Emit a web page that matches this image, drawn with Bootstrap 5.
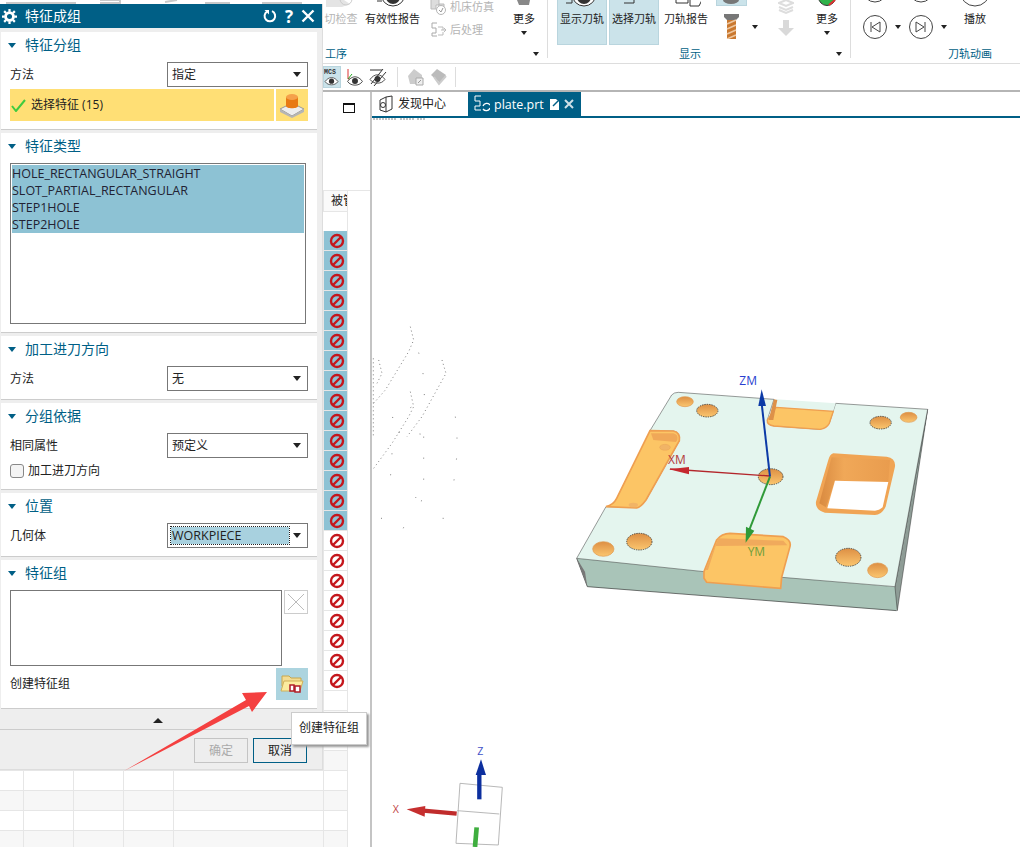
<!DOCTYPE html>
<html lang="zh-CN">
<head>
  <meta charset="UTF-8" />
  <meta name="viewport" content="width=device-width, initial-scale=1.0" />
  <title>特征成组</title>
  <link href="https://cdn.jsdelivr.net/npm/bootstrap@5.3.3/dist/css/bootstrap.min.css" rel="stylesheet">
  <style>
    :root { --nx-teal: #005f86; --nx-hl: #8dc2d4; --nx-active: #cbe3ea; }
    html, body { height: 847px; overflow: hidden; }
    body { width: 1020px; position: relative; background: #fff; color: #222; font: 12px/1.2 "Open Sans", "Noto Sans CJK SC", sans-serif; }

    /* ribbon */
    .ribbon { height: 64px; padding-left: 323px; border-bottom: 1px solid #ddd; overflow: hidden; font-size: 11px; }
    .rib-behind { position: absolute; left: 0; top: 0; }
    .rib-group { height: 58px; border-right: 1px solid #ddd; flex: none; }
    .rib-g1 { width: 225px; }
    .rib-g2 { width: 303px; padding-left: 9px; }
    .rib-g3 { width: 169px; border-right: 0; padding-left: 12px; }
    .rib-items { height: 48px; flex: none; }
    .rib-label { height: 12px; flex: none; color: var(--nx-teal); line-height: 12px; padding-right: 8px; }
    .rib-item { height: 45px; display: flex; flex-direction: column; align-items: center; text-align: center; white-space: nowrap; }
    .rib-item svg { display: block; flex: none; }
    .rib-top { height: 12px; overflow: hidden; flex: none; }
    .rib-off { color: #b5b5b5; }
    .rib-on { background: var(--nx-active); border: 1px solid #b9d5de; border-top: 0; }
    .caret-d { width: 0; height: 0; border: 3.5px solid transparent; border-top: 4px solid #222; border-bottom: 0; display: inline-block; flex: none; }
    .w-check { width: 36px; }
    .w-valid { width: 55px; margin-left: 6px; }
    .w-tools { width: 64px; margin: -5px 0 0 10px; }
    .w-more { width: 22px; margin-left: 19px; }
    .w-show { width: 50px; margin-right: 2px; }
    .w-report { width: 44px; margin-left: 3px; }
    .w-drill { width: 31px; margin-left: 8px; }
    .drill-top { height: 6px; }
    .drill-row { margin-top: 8px; padding-left: 8px; gap: 12px; }
    .drill-row svg { flex: none; }
    .w-stack { width: 16px; margin-left: 31px; }
    .w-more2 { width: 22px; margin-left: 22px; }
    .w-play { width: 24px; }
    .rib-small { height: 23px; color: #b5b5b5; gap: 4px; }
    .rib-item .caret-d { margin-top: 6px; }
    .label-g1 { margin-left: 2px; }
    .label-g2 { margin-left: 122px; }
    .label-g3 { margin-right: 20px; }

    /* second toolbar */
    .toolbar { height: 28px; padding-left: 323px; border-bottom: 2px solid #b5b5b5; }
    .tb-btn { width: 18px; height: 22px; margin-right: 5px; }
    .tb-on { background: var(--nx-active); border: 1px solid #b9d5de; }
    .tb-sep { width: 1px; height: 20px; background: #ddd; margin: 0 9px 0 5px; }
    .tb-sep.tb-last { margin-left: 2px; }

    /* page body */
    .work { height: 755px; }
    .side { width: 372px; flex: none; border-right: 2px solid #c4c4c4; overflow: hidden; }
    .side-top { height: 98px; padding: 11px 0 0 343px; }
    .win-box { width: 12px; height: 10px; border: 1px solid #111; border-top-width: 2px; }
    .grid-row { display: grid; grid-template-columns: 24px 50px 50px 50px 150px 24px 1fr; height: 20px; }
    .grid-row > span { border-right: 1px solid #e6e6e6; border-bottom: 1px solid #e6e6e6; }
    .grid-row > span:last-child { border: 0; }
    .grid-row.alt > span:not(:last-child) { background: #f7f7f7; }
    .grid-row.hit > span:nth-child(6) { background: var(--nx-hl); }
    .ban-cell { padding-left: 2px; }
    .grid-head { height: 22px; border-top: 1px solid #e6e6e6; }
    .grid-head > span:nth-child(6) { overflow: hidden; white-space: nowrap; padding: 3px 0 0 7px; background: #fafafa; width: 24px; }
    .grid-gap { height: 19px; padding-left: 324px; }
    .grid-gap i { display: block; width: 24px; height: 100%; border-right: 1px solid #e6e6e6; }
    .view { min-width: 0; }
    .tabs { height: 26px; border-bottom: 2px solid var(--nx-teal); }
    .tab-item { height: 24px; gap: 4px; }
    .tab-home { width: 96px; padding-left: 6px; font-size: 12px; }
    .tab-live { width: 113px; padding-left: 6px; background: var(--nx-teal); color: #fff; font-size: 12.5px; }
    .canvas3d { display: block; width: 648px; height: 729px; }

    /* dialog */
    .nx-dialog { position: absolute; left: 0; top: 4px; width: 323px; height: 766px; background: #eee; border-right: 1px solid #ddd; border-bottom: 1px solid #ddd; z-index: 5; }
    .nx-title { height: 24px; background: var(--nx-teal); color: #fff; font-size: 14px; margin-bottom: 4px; padding: 0 7px 0 2px; }
    .nx-title b { font-weight: 700; font-size: 17px; line-height: 1; }
    .sec { width: 316px; margin: 0 0 3px 1px; padding: 0 9px; background: #fff; border: 0; border-bottom: 1px solid #ccc; border-radius: 0; }
    .sec-head { height: 30px; color: var(--nx-teal); font-size: 14px; gap: 9px; padding: 0 0 4px; margin-left: -2px; }
    .caret-s { width: 0; height: 0; border: 4px solid transparent; border-top: 5px solid var(--nx-teal); border-bottom: 0; flex: none; }
    .sec-1 { height: 98px; }
    .sec-2 { height: 200px; }
    .sec-3 { height: 64px; }
    .sec-4 { height: 87px; }
    .sec-5 { height: 64px; }
    .sec-6 { height: 149px; }
    .form-line { height: 25px; }
    .form-line label { margin-top: 2px; }
    .nx-select { width: 141px; height: 25px; padding: 0 6px 0 4px; border: 1px solid #777; border-radius: 0; background: #fff; font-size: 12px; color: #222; }
    .nx-select::after { margin: 0; border-top: 5px solid #222; border-left: 4px solid transparent; border-right: 4px solid transparent; border-bottom: 0; }
    .sel-on { display: block; line-height: 17px; font-size: 12.5px; background: #a8d1df; outline: 1px dotted #222; padding: 0 0 0 1px; margin-left: -1px; width: 118px; text-align: left; }
    .pick-row { height: 32px; margin-top: 2px; gap: 2px; }
    .pick-main { flex: 1; background: #ffdf75; gap: 5px; padding-left: 1px; }
    .pick-tile { width: 32px; height: 32px; background: #ffdf75; }
    .type-box { width: 296px; height: 161px; border: 1px solid #777; padding: 1px; }
    .type-box div { background: var(--nx-hl); height: 17px; line-height: 17px; font-size: 12.5px; white-space: nowrap; color: #223; }
    .group-box { width: 272px; height: 76px; border: 1px solid #777; }
    .del-btn { width: 24px; height: 24px; border: 1px solid #ccc; background: #fff; }
    .make-row { height: 32px; margin-top: 2px; }
    .folder-tile { width: 32px; height: 32px; background: #acd4df; }
    .form-check.nx-check { min-height: 0; margin: 5px 0 0; padding: 0; gap: 4px; }
    .nx-check .form-check-input { float: none; width: 14px; height: 14px; margin: 0; border: 1px solid #888; border-radius: 3px; background-color: #f4f4f4; }
    .nx-check label { margin-top: 1px; }
    .nx-split { height: 17px; width: 316px; }
    .nx-rule { border-top: 1px solid #ccc; }
    .caret-u { width: 0; height: 0; border: 5px solid transparent; border-bottom: 5px solid #222; border-top: 0; }
    .nx-foot { padding: 8px 15px 0 0; gap: 5px; }
    .nx-btn { width: 54px; height: 25px; padding: 0; border-radius: 0; font-size: 12px; background: #eee; }
    .nx-btn:disabled { border: 1px solid #c4c4c4; color: #aaa; opacity: 1; background: #eee; }
    .nx-cancel { border: 1px solid var(--nx-teal); color: #222; }

    /* things that lie over the page */
    .nx-tip { position: absolute; left: 291px; top: 712px; width: 76px; height: 33px; z-index: 7; background: #fff; border: 1px solid #ccc; box-shadow: 2px 2px 2px #999; font-size: 12px; }
    .red-arrow { position: absolute; left: 100px; top: 670px; z-index: 6; }
  </style>
</head>
<body>

  <svg width="0" height="0" class="position-absolute">
    <defs>
      <linearGradient id="holeFill" x1="0" y1="0" x2="0" y2="1">
        <stop offset="0" stop-color="#dd8f44"/>
        <stop offset="1" stop-color="#fbc66f"/>
      </linearGradient>
      <linearGradient id="wallFill" x1="0" y1="0" x2="1" y2="0">
        <stop offset="0" stop-color="#d98a40"/>
        <stop offset=".35" stop-color="#f0a858"/>
        <stop offset="1" stop-color="#e99c4e"/>
      </linearGradient>
    </defs>
    <symbol id="ban" viewBox="0 0 16 16">
      <circle cx="8" cy="8" r="6" fill="none" stroke="#c4161c" stroke-width="2.4"/>
      <path d="M4 12 12 4" stroke="#c4161c" stroke-width="2.4"/>
    </symbol>
    <symbol id="eye" viewBox="0 0 18 14">
      <path d="M1 8c2-3 5-5 8-5s6 2 8 5c-2 3-5 4-8 4S3 11 1 8Z" fill="#fff" stroke="#444"/>
      <circle cx="9" cy="7.5" r="3.2" fill="#333"/>
    </symbol>
  </svg>

  <!-- ribbon -->
  <svg class="rib-behind" width="323" height="4"><path d="M6 3h70M100 0h20v3h-20M165 2l12-2M205 3h25M262 3h40" stroke="#c9c9c9" stroke-width="2" fill="none"/></svg>
  <div class="ribbon d-flex">
    <div class="rib-group rib-g1 d-flex flex-column">
      <div class="rib-items d-flex">
        <div class="rib-item w-check rib-off">
          <div class="rib-top"><svg width="30" height="12"><path d="M0 0h18l6 4-8 3H0Z" fill="#e4e4e4"/><circle cx="20" cy="-1" r="6" fill="none" stroke="#ccc"/></svg></div>
          <span>切检查</span>
        </div>
        <div class="rib-item w-valid">
          <div class="rib-top"><svg width="32" height="12"><circle cx="16" cy="-6" r="12" fill="#fff" stroke="#333"/><circle cx="16" cy="-3" r="7" fill="#333"/><path d="M0 1h5" stroke="#333"/></svg></div>
          <span>有效性报告</span>
        </div>
        <div class="w-tools">
          <div class="rib-small d-flex align-items-center">
            <svg width="16" height="18"><path d="M1 1h8v6H6v4H1Zm8 5h5v5H9Z" fill="#ddd" stroke="#bbb"/><circle cx="11" cy="12" r="4.5" fill="#fff" stroke="#b5b5b5"/><path d="m9 12 2 2 2-4" fill="none" stroke="#999"/></svg>
            <span>机床仿真</span>
          </div>
          <div class="rib-small d-flex align-items-center">
            <svg width="16" height="18"><path d="M7 2H2v5h4v5H2v3h5" fill="none" stroke="#aaa"/><path d="M8 6h5v3M8 14h5v-3M11 9h5l-2-2m2 2-2 2" fill="none" stroke="#bbb"/></svg>
            <span>后处理</span>
          </div>
        </div>
        <div class="rib-item w-more">
          <div class="rib-top"><svg width="16" height="12"><path d="M1 0h13l-1 5H3Z" fill="#888"/></svg></div>
          <span>更多</span>
          <i class="caret-d"></i>
        </div>
      </div>
      <div class="rib-label d-flex justify-content-between align-items-center"><span class="label-g1">工序</span><i class="caret-d"></i></div>
    </div>

    <div class="rib-group rib-g2 d-flex flex-column">
      <div class="rib-items d-flex">
        <div class="rib-item w-show rib-on">
          <div class="rib-top"><svg width="32" height="12"><circle cx="18" cy="-6" r="12" fill="#fff" stroke="#333"/><circle cx="18" cy="-3" r="7" fill="#333"/><path d="M0 3h6V0" fill="none" stroke="#333"/></svg></div>
          <span>显示刀轨</span>
        </div>
        <div class="rib-item w-show rib-on">
          <div class="rib-top"><svg width="32" height="12"><path d="M6 3h10V0" fill="none" stroke="#333"/></svg></div>
          <span>选择刀轨</span>
        </div>
        <div class="rib-item w-report">
          <div class="rib-top"><svg width="30" height="12"><path d="M5 0v3h12V0M19 0v6h9l3-6" fill="#fff" stroke="#333"/></svg></div>
          <span>刀轨报告</span>
        </div>
        <div class="w-drill">
          <div class="rib-on drill-top"><svg class="d-block mx-auto" width="29" height="5"><ellipse cx="14" cy="0" rx="8" ry="4" fill="#777"/></svg></div>
          <div class="drill-row d-flex align-items-center">
            <svg width="16" height="25" viewBox="0 0 16 25"><path d="M0 0h15v3l-3 3H3L0 3Z" fill="#777"/><path d="M3 6h9v19H3Z" fill="#c9782f"/><path d="m3 10 9-4M3 15l9-4M3 20l9-4M3 25l9-4" stroke="#eec7a0" stroke-width="1.5"/></svg>
            <i class="caret-d"></i>
          </div>
        </div>
        <div class="w-stack">
          <svg class="d-block" width="16" height="15"><path d="M1 3 8 0l7 3-7 3Zm0 4 7 3 7-3m-14 3 7 3 7-3" fill="none" stroke="#ddd" stroke-width="2"/></svg>
          <svg class="d-block mt-1" width="16" height="18"><path d="M5 1h6v8h5l-8 8-8-8h5Z" fill="#d9d9d9"/></svg>
        </div>
        <div class="rib-item w-more2">
          <div class="rib-top"><svg width="20" height="12"><circle cx="10" cy="-3" r="8.5" fill="#2fb24a" stroke="#333"/><path d="M12 5 18 0" stroke="#d33" stroke-width="2"/></svg></div>
          <span>更多</span>
          <i class="caret-d"></i>
        </div>
      </div>
      <div class="rib-label d-flex justify-content-between align-items-center"><span class="label-g2">显示</span><i class="caret-d"></i></div>
    </div>

    <div class="rib-group rib-g3 d-flex flex-column">
      <div class="rib-items d-flex">
        <div class="d-flex flex-column">
          <svg width="24" height="3"><circle cx="12" cy="-10" r="12" fill="none" stroke="#444"/></svg>
          <div class="d-flex align-items-center mt-2 pt-1">
            <svg width="24" height="24"><circle cx="12" cy="12" r="11.5" fill="#fff" stroke="#444"/><path d="M8 7v10M17 7l-8 5 8 5Z" fill="none" stroke="#444"/></svg>
            <i class="caret-d ms-2"></i>
          </div>
        </div>
        <div class="d-flex flex-column ms-2">
          <svg width="24" height="3"><circle cx="12" cy="-10" r="12" fill="none" stroke="#444"/></svg>
          <div class="d-flex align-items-center mt-2 pt-1">
            <svg width="24" height="24"><circle cx="12" cy="12" r="11.5" fill="#fff" stroke="#444"/><path d="M16 7v10M7 7l8 5-8 5Z" fill="none" stroke="#444"/></svg>
            <i class="caret-d ms-2"></i>
          </div>
        </div>
        <div class="rib-item w-play ms-3">
          <div class="rib-top"><svg width="30" height="12"><circle cx="15" cy="-9" r="15" fill="none" stroke="#444"/></svg></div>
          <span>播放</span>
        </div>
      </div>
      <div class="rib-label d-flex justify-content-end"><span class="label-g3">刀轨动画</span></div>
    </div>
  </div>

  <!-- second toolbar -->
  <div class="toolbar d-flex align-items-center">
    <div class="tb-btn tb-on d-flex align-items-center justify-content-center">
      <svg width="17" height="20" viewBox="0 0 17 20"><text x="0" y="7" font-size="7" font-weight="700" font-family="Liberation Mono, monospace" fill="#333">MCS</text><use href="#eye" y="8" width="16" height="12"/></svg>
    </div>
    <div class="tb-btn d-flex align-items-center"><svg width="18" height="20" viewBox="0 0 18 20"><path d="M2 2v10h8" fill="none" stroke="#d33"/><path d="M2 12 6 7" stroke="#2a2"/><use href="#eye" y="7" width="18" height="13"/></svg></div>
    <div class="tb-btn d-flex align-items-center"><svg width="18" height="20" viewBox="0 0 18 20"><path d="M1 3h12" stroke="#333"/><use href="#eye" y="5" width="17" height="13"/><path d="M2 17 14 2M5 19 17 5" stroke="#333"/></svg></div>
    <i class="tb-sep"></i>
    <div class="tb-btn d-flex align-items-center"><svg width="18" height="18"><path d="M7 1 1 8l2 8h12V7Z" fill="#ccc"/><path d="M9 10h7v7H9Z" fill="#eee" stroke="#aaa"/><path d="m11 15 3-3" stroke="#999"/></svg></div>
    <div class="tb-btn d-flex align-items-center"><svg width="17" height="18"><path d="m1 7 6-6 9 6-6 8Z" fill="#bbb"/><path d="m4 9 5 7 7-8" fill="none" stroke="#ccc" stroke-width="2"/></svg></div>
    <i class="tb-sep tb-last"></i>
  </div>

  <!-- page under the dialog -->
  <div class="work d-flex">
    <div class="side">
      <div class="side-top"><div class="win-box"></div></div>
      <div class="grid-row grid-head"><span></span><span></span><span></span><span></span><span></span><span>被管</span><span></span></div>
      <div class="grid-gap"><i></i></div>
      <div id="rows"></div>
    </div>
    <div class="view flex-grow-1">
      <div class="tabs d-flex">
        <div class="tab-item tab-home d-flex align-items-center">
          <svg width="16" height="18"><path d="M2 5 8 2l6-1v13l-6 3-6-2Z" fill="none" stroke="#333"/><path d="M8 2v15" stroke="#333"/><circle cx="5" cy="10" r="2.5" fill="none" stroke="#333"/></svg>
          <span>发现中心</span>
        </div>
        <div class="tab-item tab-live d-flex align-items-center">
          <svg width="16" height="18"><path d="M7 1H1v5h5v5H1v4h6" fill="none" stroke="#fff"/><path d="M9 11a4 4 0 0 1 7-1M16 13a4 4 0 0 1-7 1" fill="none" stroke="#fff" stroke-width="1.3"/></svg>
          <span>plate.prt</span>
          <svg width="12" height="13"><path d="M2 1h6l3 3v8H2Z" fill="#fff"/><path d="M5 8l5-5" stroke="#005f86" stroke-width="1.5"/></svg>
          <svg width="10" height="10"><path d="m1 1 8 8M9 1 1 9" stroke="#cfe0e7" stroke-width="2"/></svg>
        </div>
      </div>
      <svg class="canvas3d" viewBox="372 118 648 729">
        <path d="M373 119h24M400 119h14M417 119h8" stroke="#888" stroke-dasharray="2 1" fill="none"/>

        <!-- dotted points left of the part -->
        <g transform="translate(372 320) scale(.3333)" fill="none" stroke="#666" stroke-width="2.5" stroke-dasharray="3 9">
          <path d="M115 20l10 40-15 35-70 115-35 40M20 120l10 40-15 30M115 215l10 45-15 30-50 80-55 75M210 120l12 40-72 130-45 60M4 115v235"/>
          <path stroke-dasharray="3 60" d="M140 98l10 35 7 63v45l-95 50 0 45 93 7M250 290l5 50 0 65-5 40-5 45M60 400l-2 45-5 45M155 350v85l0 65-40 55 40-15-6 45M30 595l-28 0M95 622l-15 38M212 595l12 0"/>
        </g>

        <!-- the plate, drawn in zoom units -->
        <g transform="translate(570 370) scale(.3333)">
          <path d="M20 565 52 650 980 722 1073 118 975 650Z" fill="#a9c4b8"/>
          <path d="M975 650 1073 118 982 722Z" fill="#8e9c96" stroke="#333" stroke-width="1.5"/>
          <path d="M20 565 52 650 980 722" fill="none" stroke="#333" stroke-width="2"/>
          <path d="M20 565 45 605 52 650Z" fill="#777"/>
          <path d="M305 75Q312 67 325 67L612 88 592 150Q592 165 612 168L750 178Q770 175 778 160L797 100 1073 118 975 650 635 622 402 605 20 565 108 410 200 412Q212 410 228 390L328 212Q330 185 310 183L240 182Z" fill="#e4f5ee" stroke="#444" stroke-width="1.6"/>

          <!-- slots and pockets -->
          <path d="M240 182 310 183Q332 188 328 212L228 390Q212 412 200 414L108 410Q130 405 140 385Z" fill="#fcc565" stroke="#ef9f50" stroke-width="5"/>
          <path d="M243 190 310 190Q326 194 322 210L318 216 250 210Z" fill="#f0a858"/>
          <ellipse cx="285" cy="232" rx="16" ry="9" fill="#f1b466" stroke="#e59a50"/>
          <ellipse cx="190" cy="405" rx="14" ry="7" fill="#f1b466"/>
          <path d="M618 88 797 100 778 160Q770 175 750 178L612 168Q590 165 592 150Z" fill="#e4f5ee"/>
          <path d="M618 112 790 124 778 160Q770 175 750 178L612 168Q590 165 592 150Z" fill="#fcc565" stroke="#ef9f50" stroke-width="4"/>
          <path d="M612 88 622 90 610 150 596 150Z" fill="#dd9149"/>

          <path d="M790 250 950 260Q978 265 975 290L947 410Q935 435 915 435L765 428Q735 420 738 395L775 270Q780 252 790 250Z" fill="#f0a454"/>
          <path d="M785 262 960 270 955 335 795 330 768 412 748 400Z" fill="url(#wallFill)"/>
          <path d="M795 332 955 336 938 412Q930 420 915 422L772 415Z" fill="#fff"/>

          <path d="M402 605 440 510Q455 490 480 490L640 500Q665 510 660 530L635 622 632 655 410 637 402 625Z" fill="#fcc565" stroke="#ef9f50" stroke-width="5"/>
          <path d="M445 505 640 512 652 526 437 528 414 600 406 600Z" fill="#f0aa5c"/>

          <!-- holes -->
          <g fill="url(#holeFill)" stroke="#e0994f" stroke-width="2">
            <ellipse cx="345" cy="95" rx="25" ry="15"/>
            <ellipse cx="1016" cy="142" rx="25" ry="15"/>
            <ellipse cx="100" cy="537" rx="32" ry="22"/>
            <ellipse cx="923" cy="601" rx="30" ry="22"/>
          </g>
          <g fill="url(#holeFill)" stroke="#333" stroke-width="2.5" stroke-dasharray="4 3">
            <ellipse cx="412" cy="122" rx="32" ry="19"/>
            <ellipse cx="932" cy="158" rx="32" ry="19"/>
            <ellipse cx="208" cy="515" rx="38" ry="25"/>
            <ellipse cx="835" cy="562" rx="38" ry="27"/>
            <ellipse cx="602" cy="320" rx="37" ry="24"/>
          </g>

          <!-- work coordinate axes -->
          <path d="M600 318 300 297" stroke="#b3262b" stroke-width="4"/>
          <path d="M297 298 357 291 357 313Z" fill="#c5282e"/>
          <path d="M575 100 600 320" stroke="#0c3aa6" stroke-width="6"/>
          <path d="M575 58 565 108 588 108Z" fill="#0c3aa6"/>
          <path d="M600 320 538 480" stroke="#2f9a38" stroke-width="6"/>
          <path d="M527 518 528 470 553 482Z" fill="#2f9a38"/>
          <g font-family="Open Sans, sans-serif" font-size="36">
            <text x="508" y="45" fill="#2a3fd0">ZM</text>
            <text x="294" y="283" fill="#b33a3a">XM</text>
            <text x="533" y="557" fill="#6f9e3a">YM</text>
          </g>
        </g>

        <!-- view triad -->
        <g transform="translate(380 730) scale(.3333)">
          <path d="M240 160 367 172 355 345 228 340ZM232 242 358 252" fill="#fff" stroke="#aaa" stroke-width="2.5"/>
          <path d="M298 208V130" stroke="#0c2f9e" stroke-width="13"/>
          <path d="M303 88 318 135H287Z" fill="#0c2f9e"/>
          <path d="M230 251 130 242" stroke="#c02c2c" stroke-width="13"/>
          <path d="M80 238 136 228 134 260Z" fill="#c62f2f"/>
          <path d="M290 292 285 351" stroke="#3fae3f" stroke-width="14"/>
          <g font-family="Open Sans, sans-serif" font-size="32">
            <text x="292" y="76" fill="#3f52c8">Z</text>
            <text x="38" y="249" fill="#c24545">X</text>
          </g>
        </g>
      </svg>
    </div>
  </div>

  <!-- dialog -->
  <div class="nx-dialog d-flex flex-column">
    <div class="nx-title d-flex align-items-center">
      <svg width="15" height="15" viewBox="0 0 16 16" class="me-2"><circle cx="8" cy="8" r="4.2" fill="none" stroke="#fff" stroke-width="3"/><path d="M8 0v3M8 13v3M0 8h3M13 8h3M2.3 2.3l2 2M11.7 11.7l2 2M2.3 13.7l2-2M11.7 4.3l2-2" stroke="#fff" stroke-width="2.4"/></svg>
      <span class="flex-grow-1">特征成组</span>
      <svg width="14" height="14" viewBox="0 0 14 14"><path d="M4 2.6a5.3 5.3 0 1 0 5-.4" fill="none" stroke="#fff" stroke-width="2"/><path d="M1.500 1h4.500v4.500Z" fill="#fff"/></svg>
      <b class="ms-2">?</b>
      <svg class="ms-2" width="14" height="14"><path d="m1.500 1.500 11 11m0-11-11 11" stroke="#fff" stroke-width="2.4"/></svg>
    </div>

    <div class="card sec sec-1">
      <div class="sec-head d-flex align-items-center"><i class="caret-s"></i><span>特征分组</span></div>
      <div class="form-line d-flex align-items-center justify-content-between">
        <label>方法</label>
        <button type="button" class="btn nx-select dropdown-toggle d-flex align-items-center justify-content-between">指定</button>
      </div>
      <div class="pick-row d-flex">
        <div class="pick-main d-flex align-items-center">
          <svg width="15" height="13"><path d="m1 7 4 5 9-11" fill="none" stroke="#3fcb3f" stroke-width="2"/></svg>
          <span>选择特征 (15)</span>
        </div>
        <div class="pick-tile d-flex align-items-center justify-content-center">
          <svg width="26" height="26" viewBox="0 0 26 26"><path d="M1 17 13 11l12 6-12 7Z" fill="#eee" stroke="#999"/><path d="M1 17v3l12 6 12-6v-3l-12 7Z" fill="#b5b5b5"/><path d="M7 5v9c0 3 12 3 12 0V5Z" fill="#e87a14"/><ellipse cx="13" cy="5" rx="6" ry="3" fill="#f5a14a"/></svg>
        </div>
      </div>
    </div>

    <div class="card sec sec-2">
      <div class="sec-head d-flex align-items-center"><i class="caret-s"></i><span>特征类型</span></div>
      <div class="type-box">
        <div>HOLE_RECTANGULAR_STRAIGHT</div>
        <div>SLOT_PARTIAL_RECTANGULAR</div>
        <div>STEP1HOLE</div>
        <div>STEP2HOLE</div>
      </div>
    </div>

    <div class="card sec sec-3">
      <div class="sec-head d-flex align-items-center"><i class="caret-s"></i><span>加工进刀方向</span></div>
      <div class="form-line d-flex align-items-center justify-content-between">
        <label>方法</label>
        <button type="button" class="btn nx-select dropdown-toggle d-flex align-items-center justify-content-between">无</button>
      </div>
    </div>

    <div class="card sec sec-4">
      <div class="sec-head d-flex align-items-center"><i class="caret-s"></i><span>分组依据</span></div>
      <div class="form-line d-flex align-items-center justify-content-between">
        <label>相同属性</label>
        <button type="button" class="btn nx-select dropdown-toggle d-flex align-items-center justify-content-between">预定义</button>
      </div>
      <div class="form-check nx-check d-flex align-items-center">
        <input class="form-check-input" type="checkbox" id="feedDir">
        <label class="form-check-label" for="feedDir">加工进刀方向</label>
      </div>
    </div>

    <div class="card sec sec-5">
      <div class="sec-head d-flex align-items-center"><i class="caret-s"></i><span>位置</span></div>
      <div class="form-line d-flex align-items-center justify-content-between">
        <label>几何体</label>
        <button type="button" class="btn nx-select dropdown-toggle d-flex align-items-center justify-content-between"><span class="sel-on">WORKPIECE</span></button>
      </div>
    </div>

    <div class="card sec sec-6">
      <div class="sec-head d-flex align-items-center"><i class="caret-s"></i><span>特征组</span></div>
      <div class="d-flex justify-content-between">
        <div class="group-box"></div>
        <div class="del-btn d-flex align-items-center justify-content-center">
          <svg width="20" height="20"><path d="m2 2 16 16M18 2 2 18" stroke="#bbb"/></svg>
        </div>
      </div>
      <div class="make-row d-flex align-items-center justify-content-between">
        <span>创建特征组</span>
        <div class="folder-tile d-flex align-items-center justify-content-center">
          <svg width="24" height="22" viewBox="0 0 24 22"><path d="M2 3h7l2 2h10v8H2Z" fill="#f3dc92" stroke="#c8a64c"/><path d="M1 18 4 8h19l-3 10Z" fill="#fcec9f" stroke="#d0b058"/><path d="M10 12h4v6h-4Zm5 1h5v6h-5Z" fill="#fff" stroke="#b01e2a" stroke-width="1.500"/></svg>
        </div>
      </div>
    </div>

    <div class="nx-split d-flex align-items-center justify-content-center"><i class="caret-u"></i></div>
    <div class="nx-rule nx-foot d-flex justify-content-end">
      <button type="button" class="btn nx-btn" disabled>确定</button>
      <button type="button" class="btn nx-btn nx-cancel">取消</button>
    </div>
  </div>

  <svg class="red-arrow" width="175" height="110" viewBox="100 670 175 110">
    <path d="M124 771 246 700 242 693 267 692 252 712 249 706Z" fill="#f44040"/>
  </svg>
  <div class="nx-tip d-flex align-items-center justify-content-center">创建特征组</div>

  <script>
    // grid rows behind the dialog: 15 picked, 8 not picked, the rest empty
    const rows = document.getElementById("rows");
    let html = "";
    for (let i = 0; i < 31; i++) {
      const cls = i < 15 ? "hit" : "";
      const alt = i >= 23 && i % 2 === 0 ? "alt" : "";
      const icon = i < 23 ? '<svg width="16" height="16"><use href="#ban"/></svg>' : "";
      html += `<div class="grid-row ${cls} ${alt}"><span></span><span></span><span></span><span></span><span></span><span class="ban-cell d-flex align-items-center justify-content-center">${icon}</span><span></span></div>`;
    }
    rows.innerHTML = html;
  </script>
  <script src="https://cdn.jsdelivr.net/npm/bootstrap@5.3.3/dist/js/bootstrap.bundle.min.js"></script>
</body>
</html>
